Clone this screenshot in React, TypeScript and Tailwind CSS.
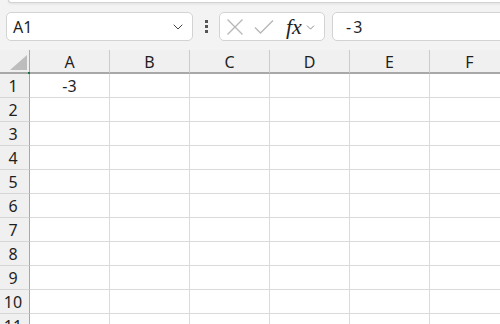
import { ChevronDown } from "lucide-react";

const COLS = ["A", "B", "C", "D", "E", "F"];
const ROWS = [1, 2, 3, 4, 5, 6, 7, 8, 9, 10, 11];

export default function App() {
  return (
    <div className="w-[500px] h-[324px] overflow-hidden bg-[#f3f3f3] font-['Noto_Sans',sans-serif] text-[#1f1f1f]">
      {/* ribbon bottom edge */}
      <div className="ml-2 -mr-4 h-[3px] rounded-bl-[6px] bg-white border-b border-l border-[#d2d2d2] shadow-[0_1px_3px_rgba(0,0,0,0.08)]" />

      {/* name box + formula bar */}
      <div className="mt-[9px] flex h-[29px] items-stretch pl-[6px]">
        <div className="flex w-[187px] items-center justify-between rounded-[5px] border border-[#d3d3d3] bg-white pl-[6px] pr-[6px]">
          <span className="text-[16px] leading-none">A1</span>
          <ChevronDown size={16} strokeWidth={1.5} className="text-[#444]" />
        </div>

        <div className="flex w-[26px] flex-col items-center justify-center gap-[2px]">
          <span className="h-[3px] w-[3px] bg-[#555]" />
          <span className="h-[3px] w-[3px] bg-[#555]" />
          <span className="h-[3px] w-[3px] bg-[#555]" />
        </div>

        <div className="flex w-[106px] items-center rounded-[5px] border border-[#d3d3d3] bg-white pl-[6px]">
          <svg width="18" height="18" viewBox="0 0 18 18" className="shrink-0">
            <path d="M1.5 1.5 L16.5 16.5 M16.5 1.5 L1.5 16.5" stroke="#b8b8b8" strokeWidth="1.4" fill="none" />
          </svg>
          <svg width="20" height="16" viewBox="0 0 20 16" className="ml-[10px] shrink-0">
            <path d="M1 8.5 L6.5 14 L19 1.5" stroke="#b8b8b8" strokeWidth="1.4" fill="none" />
          </svg>
          <span className="ml-[12px] font-['Liberation_Serif',serif] text-[22px] italic leading-none text-[#222]">
            fx
          </span>
          <ChevronDown size={13} strokeWidth={1.5} className="ml-[2px] mt-[2px] text-[#777]" />
        </div>

        <div className="-mr-4 ml-[7px] flex flex-1 items-center rounded-l-[5px] border border-[#d3d3d3] bg-white pl-[13px]">
          <span className="text-[16px] leading-none tracking-[2px]">-3</span>
        </div>
      </div>

      {/* sheet grid */}
      <div className="mt-[9px] grid grid-cols-[30px_repeat(6,80px)] text-[16px] leading-none">
        <div className="relative flex h-[24px] items-end justify-end border-b-2 border-r border-[#a8a8a8] bg-[#f0f0f0] pb-[2px] pr-[2px]">
          <svg width="17" height="15" viewBox="0 0 17 15">
            <path d="M17 0 L17 15 L0 15 Z" fill="#bdbdbd" />
          </svg>
          <span className="absolute -bottom-[2px] -right-[1px] h-[2px] w-[2px] bg-[#1e7145]" />
        </div>
        {COLS.map((c) => (
          <div
            key={c}
            className="flex h-[24px] items-center justify-center border-b-2 border-r border-b-[#a8a8a8] border-r-[#cbcbcb] bg-[#f0f0f0] pt-[1px]"
          >
            {c}
          </div>
        ))}

        {ROWS.map((r) => (
          <div key={r} className="contents">
            <div className="flex h-[24px] items-center justify-center border-b border-r border-b-[#d6d6d6] border-r-[#a8a8a8] bg-[#f0f0f0] pr-[3px]">
              {r}
            </div>
            {COLS.map((c) => (
              <div
                key={c}
                className="flex h-[24px] items-center justify-center border-b border-r border-[#dadada] bg-white"
              >
                {r === 1 && c === "A" ? "-3" : ""}
              </div>
            ))}
          </div>
        ))}
      </div>
    </div>
  );
}
